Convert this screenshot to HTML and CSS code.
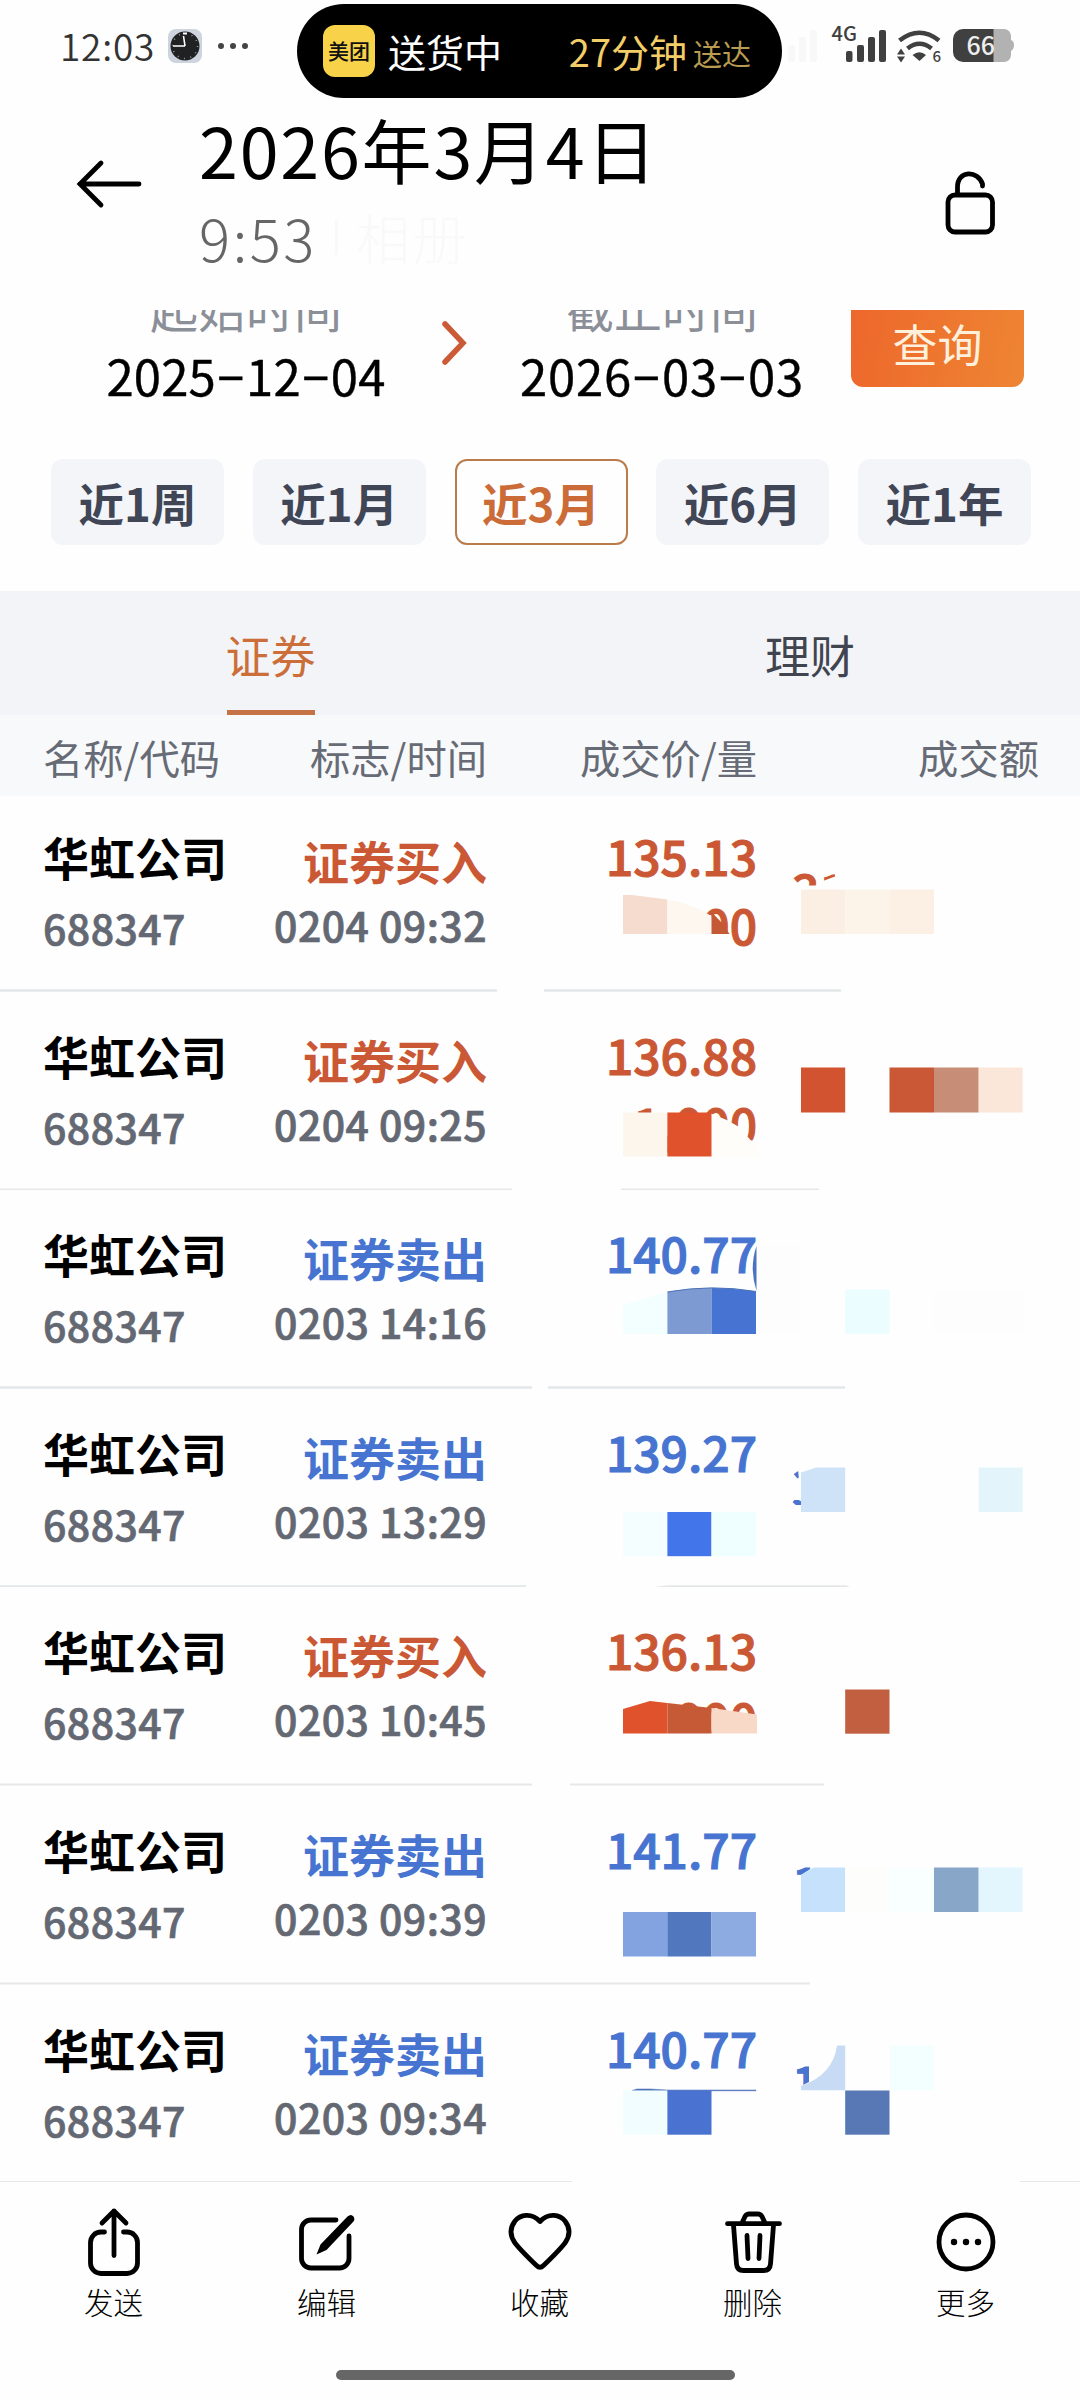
FILE: index.html
```html
<!DOCTYPE html>
<html lang="zh-CN">
<head>
    <meta charset="UTF-8">
    <meta name="viewport" content="width=device-width, initial-scale=1.0">
    <title>2026年3月4日</title>
    <link rel="stylesheet" href="styles.css">
</head>
<body>
    <div class="status-bar">
        <span class="clock">12:03</span>
        <svg class="clock-icon" width="34" height="34" viewBox="0 0 34 34">
            <rect width="34" height="34" rx="8" fill="#cdd4dd"/>
            <circle cx="17" cy="17" r="14.5" fill="#1f2123"/>
            <circle cx="17" cy="17" r="12.5" fill="none" stroke="#999" stroke-width="1.5" stroke-dasharray="1 5.54"/>
            <path d="M17 17L15.5 7M17 17H5" stroke="#fff" stroke-width="1.6" fill="none"/>
            <path d="M15 4.5h4" stroke="#fff" stroke-width="2"/>
        </svg>
        <svg class="dots" width="32" height="8" viewBox="0 0 32 8" fill="#444">
            <circle cx="4" cy="4" r="3"/><circle cx="16" cy="4" r="3"/><circle cx="28" cy="4" r="3"/>
        </svg>
        <div class="island">
            <span class="app-logo">美团</span>
            <span class="island-title">送货中</span>
            <span class="island-time">27分钟</span>
            <span class="island-note">送达</span>
        </div>
        <svg class="signals" width="232" height="60" viewBox="786 16 232 60" fill="#404040">
            <g fill="#f8f8f8">
                <rect x="788" y="45" width="7" height="17" rx="2"/>
                <rect x="799" y="37" width="7" height="25" rx="2"/>
                <rect x="810" y="30" width="7" height="32" rx="2"/>
            </g>
            <text class="net" x="831.5" y="40.5">4G</text>
            <rect x="846" y="51" width="6.5" height="11" rx="2"/>
            <rect x="857" y="45" width="7" height="17" rx="2"/>
            <rect x="868" y="37" width="7" height="25" rx="2"/>
            <rect x="879" y="30" width="7" height="32" rx="2"/>
            <path d="M899.500 40.500Q919.500 25 939 40.500M907.500 48.500Q919.500 39 931.500 48.500" fill="none" stroke="#404040" stroke-width="4.600"/>
            <path d="M912.500 55Q919.500 49.500 926 55L919.500 61Z"/>
            <path d="M897 54.500L901 48.500L905 54.500ZM897 56.500H905L901 62.500Z"/>
            <text class="wifi-gen" x="932.500" y="62">6</text>
            <path d="M1004 29a7 7 0 0 1 7 7v4q3 1 3 5t-3 6v4a7 7 0 0 1-7 7h-11V29Z" fill="#b2b2b2"/>
            <path d="M993.500 29H963a10 10 0 0 0-10 10v13a10 10 0 0 0 10 10h30.500Z"/>
            <text class="battery" x="966.500" y="55">66</text>
        </svg>
    </div>

    <header class="header">
        <svg class="back" width="72" height="56" viewBox="0 0 72 56" fill="none" stroke="#000" stroke-width="4.800" stroke-linecap="round">
            <path d="M7 28H66M28 7L7 28L28 49"/>
        </svg>
        <div class="heading">
            <h1>2026年3月4日</h1>
            <p>9:53<span class="album"><i></i>相册</span></p>
        </div>
        <svg class="lock" width="56" height="66" viewBox="0 0 56 66" fill="none" stroke="#000" stroke-width="4.800" stroke-linecap="round">
            <rect x="6" y="26" width="44.500" height="37" rx="7"/>
            <path d="M15.500 25V18C15.500 1 36 1 40.500 15V17"/>
        </svg>
    </header>

    <main>
        <section class="query">
            <div class="date">
                <label>起始时间</label>
                <strong>2025<b>-</b>12<b>-</b>04</strong>
            </div>
            <svg class="arrow" width="26" height="46" viewBox="0 0 26 46" fill="none" stroke="#cb5b36" stroke-width="5.500" stroke-linecap="round">
                <path d="M4 4L22 23L4 42"/>
            </svg>
            <div class="date date-end">
                <label>截止时间</label>
                <strong>2026<b>-</b>03<b>-</b>03</strong>
            </div>
            <button class="search">查询</button>
        </section>

        <section class="ranges">
            <button>近1周</button>
            <button>近1月</button>
            <button class="active">近3月</button>
            <button>近6月</button>
            <button>近1年</button>
        </section>

        <nav class="tabs">
            <a class="active">证券</a>
            <a>理财</a>
        </nav>

        <div class="columns">
            <span>名称/代码</span>
            <span>标志/时间</span>
            <span>成交价/量</span>
            <span>成交额</span>
        </div>

        <div class="trades">
            <div class="trade buy">
                <div class="stock"><h3>华虹公司</h3><p>688347</p></div>
                <div class="side"><h3>证券买入</h3><p>0204 09:32</p></div>
                <div class="price"><h3>135.13</h3><p>00</p></div>
                <div class="amount">31</div>
                <svg class="cover" viewBox="0 0 1080 198.600">
                    <path d="M600 141H731V162H600ZM690 122H711.500V150H690ZM780 92.500H818V130H780ZM817 70H823V130H817ZM823 88L835 83.500V76H860V130H817Z" fill="#fefefe"/>
                    <path d="M623 102H632L667.400 106.500V141H623Z" fill="#f6dccf"/>
                    <path d="M667.400 106.500Q690 110 711.500 123V141H667.400Z" fill="#fdf7ef"/>
                    <path d="M711.500 119L723 131L729.500 141H711.500Z" fill="#c45935"/>
                    <rect x="801" y="96.500" width="44.500" height="44.500" fill="#fbeee2"/>
                    <rect x="845.500" y="96.500" width="44" height="44.500" fill="#fcf4e8"/>
                    <rect x="889.500" y="96.500" width="44.500" height="44.500" fill="#fcf0e5"/>
                    <path class="rule" d="M0 197.500H497M544 197.500H841"/>
                </svg>
            </div>

            <div class="trade buy">
                <div class="stock"><h3>华虹公司</h3><p>688347</p></div>
                <div class="side"><h3>证券买入</h3><p>0204 09:25</p></div>
                <div class="price"><h3>136.88</h3><p>1,000</p></div>
                <div class="amount"></div>
                <svg class="cover" viewBox="0 0 1080 198.600">
                    <path d="M711 121.500L728 128.500L739 135L751 148.500H758V165H711Z" fill="#fefdfa"/>
                    <rect x="623" y="120.500" width="44.500" height="44" fill="#fdf6ed"/>
                    <rect x="667.400" y="120.500" width="44.100" height="44" fill="#e0522c"/>
                    <rect x="801" y="75.500" width="44.200" height="45" fill="#d1532f"/>
                    <rect x="889.500" y="75.500" width="44.500" height="45" fill="#ca5735"/>
                    <rect x="934" y="75.500" width="44.700" height="45" fill="#c88d76"/>
                    <rect x="978.700" y="75.500" width="44" height="45" fill="#fbe7da"/>
                    <path class="rule thin" d="M0 197.500H512M621 197.500H819"/>
                </svg>
            </div>

            <div class="trade sell">
                <div class="stock"><h3>华虹公司</h3><p>688347</p></div>
                <div class="side"><h3>证券卖出</h3><p>0203 14:16</p></div>
                <div class="price"><h3>140.77</h3><p></p></div>
                <div class="amount"></div>
                <svg class="cover" viewBox="0 0 1080 198.600">
                    <path d="M756.500 56Q749 78 756.500 101Z" fill="#4a72c0"/>
                    <path d="M623 115L667.400 102V144H623Z" fill="#f3ffff"/>
                    <path d="M667.400 102Q690 98 711.500 98V144H667.400Z" fill="#7d9bd2"/>
                    <path d="M711.500 98Q735 98 756 101.500V144H711.500Z" fill="#4774d3"/>
                    <path d="M667.400 102Q712 94 756 101.500" fill="none" stroke="#4a6fb5" stroke-width="1"/>
                    <rect x="757" y="55" width="44" height="89" fill="#fefdfd"/>
                    <rect x="845.200" y="99.500" width="44.300" height="44.500" fill="#ebfdff"/>
                    <rect x="934" y="99.500" width="88.700" height="44.500" fill="#fdfdfd"/>
                    <path class="rule" d="M0 197.500H532M548 197.500H845"/>
                </svg>
            </div>

            <div class="trade sell">
                <div class="stock"><h3>华虹公司</h3><p>688347</p></div>
                <div class="side"><h3>证券卖出</h3><p>0203 13:29</p></div>
                <div class="price"><h3>139.27</h3><p></p></div>
                <div class="amount">3</div>
                <svg class="cover" viewBox="0 0 1080 198.600">
                    <path d="M785 91H799L798 80L815 76H850V130H785V116H801V111H785Z" fill="#fefefe"/>
                    <rect x="623" y="123" width="44.500" height="44.200" fill="#f4fdff"/>
                    <rect x="667.400" y="123" width="44.100" height="44.200" fill="#4274ea"/>
                    <rect x="711.500" y="123" width="44.500" height="44.200" fill="#effeff"/>
                    <path d="M801 83.500L816 78.500H845.200V123H801Z" fill="#cfe3f8"/>
                    <rect x="978.700" y="78.500" width="44" height="44.500" fill="#e3f5fb"/>
                    <path class="rule" d="M0 197.500H526"/>
                    <path d="M650 198.500L668 196.200H846L851 198.500Z" fill="#e4e7e8"/>
                </svg>
            </div>

            <div class="trade buy">
                <div class="stock"><h3>华虹公司</h3><p>688347</p></div>
                <div class="side"><h3>证券买入</h3><p>0203 10:45</p></div>
                <div class="price"><h3>136.13</h3><p>000</p></div>
                <div class="amount"></div>
                <svg class="cover" viewBox="0 0 1080 198.600">
                    <rect x="620" y="146" width="140" height="12" fill="#fefefe"/>
                    <path d="M623 122L650 114L667.400 116V146.500H623Z" fill="#e0522c"/>
                    <path d="M667.400 116L711.500 121V146.500H667.400Z" fill="#c65a36"/>
                    <path d="M711.500 121L757 127.500V146.500H711.500Z" fill="#f8d9c8"/>
                    <rect x="845.200" y="102.500" width="44.300" height="44.200" fill="#c15f40"/>
                    <path class="rule thin" d="M0 197.500H532M570 197.500H824"/>
                </svg>
            </div>

            <div class="trade sell">
                <div class="stock"><h3>华虹公司</h3><p>688347</p></div>
                <div class="side"><h3>证券卖出</h3><p>0203 09:39</p></div>
                <div class="price"><h3>141.77</h3><p></p></div>
                <div class="amount">1</div>
                <svg class="cover" viewBox="0 0 1080 198.600">
                    <path d="M785 92L801 89L812 82H850V130H785Z" fill="#fefefe"/>
                    <rect x="623" y="126" width="44.500" height="44.500" fill="#82a2e0"/>
                    <rect x="667.400" y="126" width="44.100" height="44.500" fill="#5178be"/>
                    <rect x="711.500" y="126" width="44.500" height="44.500" fill="#8dabe1"/>
                    <path d="M801 89L814 81.500H845.200V126H801Z" fill="#c5e1fb"/>
                    <rect x="845.200" y="81.500" width="44.300" height="44.500" fill="#fdfdfb"/>
                    <rect x="889.500" y="81.500" width="44.500" height="44.500" fill="#f9ffff"/>
                    <rect x="934" y="81.500" width="44.700" height="44.500" fill="#87a6c8"/>
                    <rect x="978.700" y="81.500" width="44" height="44.500" fill="#e4f6fd"/>
                    <path class="rule thin" d="M0 197.500H810"/>
                </svg>
            </div>

            <div class="trade sell">
                <div class="stock"><h3>华虹公司</h3><p>688347</p></div>
                <div class="side"><h3>证券卖出</h3><p>0203 09:34</p></div>
                <div class="price"><h3>140.77</h3><p></p></div>
                <div class="amount">1</div>
                <svg class="cover" viewBox="0 0 1080 198.600">
                    <path d="M785 101L801 101L809 97V80H835V130H785Z" fill="#fefefe"/>
                    <path d="M632 105.500L637 104H650L667 105H756V105.800H632Z" fill="#4a70b8" stroke="#4a70b8" stroke-width=".5"/>
                    <rect x="623" y="105.500" width="44.500" height="44.200" fill="#f1fdff"/>
                    <rect x="667.400" y="105.500" width="44.100" height="44.200" fill="#4972d1"/>
                    <path d="M801 101Q833 90 837 60.500H845.200V105.200H801Z" fill="#c7dbf4"/>
                    <rect x="889.500" y="60.500" width="44.500" height="44.500" fill="#f3feff"/>
                    <rect x="845.200" y="105.500" width="44.300" height="44.200" fill="#5777b5"/>
                    <path class="rule hair" d="M0 196.500H572M1020 196.500H1080"/>
                </svg>
            </div>
        </div>
    </main>

    <footer class="toolbar">
        <a>
            <svg width="72" height="76" viewBox="0 0 72 76">
                <path d="M26.500 28H23A10.500 10.500 0 0 0 12.500 38.500V59A10.500 10.500 0 0 0 23 69.500H49A10.500 10.500 0 0 0 59.500 59V38.500A10.500 10.500 0 0 0 49 28H45.500M36 51.500V7M24 19L36 7L48 19"/>
            </svg>
            发送
        </a>
        <a>
            <svg width="72" height="76" viewBox="0 0 72 76">
                <path d="M45 16H20A9.500 9.500 0 0 0 10.500 25.500V54.500A9.500 9.500 0 0 0 20 64H48.500A9.500 9.500 0 0 0 58 54.500V32"/>
                <path d="M56.500 12.500Q60 9.500 62.500 12.500Q64.500 15.500 62 18L35.500 46L25.500 50.500L29.500 40.500Z" fill="#000" stroke="none"/>
            </svg>
            编辑
        </a>
        <a>
            <svg width="72" height="76" viewBox="0 0 72 76">
                <path d="M36 17.500C27 8 16 11 11 17C5 25 6 32 11 39C18 48 26 55 32.500 61.500Q36 65 39.500 61.500C46 55 54 48 61 39C66 32 67 25 61 17C56 11 45 8 36 17.500Z"/>
            </svg>
            收藏
        </a>
        <a>
            <svg width="72" height="76" viewBox="0 0 72 76">
                <path d="M10.500 19.700H62.500M25 19L28 12.500Q29.500 10 32 10H41Q43.500 10 45 12.500L48 19M16.500 21L19.500 60Q20 66.500 26.500 66.500H46.500Q53 66.500 53.500 60L56.500 21M30 31.500L31 54.500M43 31.500L42 54.500"/>
            </svg>
            删除
        </a>
        <a>
            <svg width="72" height="76" viewBox="0 0 72 76">
                <circle cx="36" cy="38" r="27"/>
                <g fill="#000" stroke="none"><circle cx="24" cy="38" r="3.200"/><circle cx="36" cy="38" r="3.200"/><circle cx="48" cy="38" r="3.200"/></g>
            </svg>
            更多
        </a>
    </footer>
    <div class="home-bar"></div>
</body>
</html>
```
FILE: styles.css
```css
/* General Styles */
* {
    box-sizing: border-box;
}

body {
    margin: 0;
    width: 1080px;
    height: 2400px;
    overflow: hidden;
    background-color: #fefefe;
    color: #000;
    font-family: "Noto Sans CJK SC", sans-serif;
}

h1, h3, p {
    margin: 0;
}

button {
    border: none;
    padding: 0;
    font-family: inherit;
}

/* Status bar */
.status-bar {
    position: relative;
    display: flex;
    align-items: center;
    height: 98px;
    padding: 0 62px 6px 60px;
}

.clock {
    width: 108px;
    margin-top: -3px;
    color: #333;
    font-size: 37px;
    font-weight: 350;
    letter-spacing: 0.8px;
    line-height: 40px;
}

.dots {
    margin-left: 15px;
}

.signals {
    margin-left: auto;
}

.signals text {
    font-weight: 500;
}

.signals .net {
    font-size: 20px;
}

.signals .wifi-gen {
    font-size: 15px;
}

.signals .battery {
    font-size: 25px;
    fill: #eee;
}

.island {
    position: absolute;
    left: 297px;
    top: 4px;
    display: flex;
    align-items: center;
    width: 485px;
    height: 94px;
    padding: 0 31px 0 26px;
    border-radius: 47px;
    background-color: #000;
    color: #fff;
    font-size: 38px;
    line-height: 50px;
    white-space: nowrap;
}

.app-logo {
    width: 52px;
    height: 52px;
    border-radius: 12px;
    background-color: #f8d34a;
    color: #111;
    font-size: 21px;
    font-weight: 500;
    line-height: 50px;
    text-align: center;
}

.island-title {
    margin-left: 13px;
}

.island-time {
    margin-left: auto;
    color: #f3cd68;
}

.island-note {
    margin: 4px 0 0 6px;
    color: #b89b50;
    font-size: 29px;
}

/* Header */
.header {
    display: flex;
    height: 212px;
    padding: 3px 82px 0 73px;
}

.back {
    margin-top: 55px;
}

.heading {
    margin-left: 54px;
    padding-top: 3px;
}

.heading h1 {
    font-size: 70px;
    font-weight: 400;
    letter-spacing: 1.8px;
    line-height: 90px;
}

.heading p {
    display: flex;
    margin-top: -2px;
    color: #666;
    font-size: 58px;
    font-weight: 300;
    letter-spacing: 2.6px;
    line-height: 90px;
}

.album {
    display: flex;
    align-items: center;
    color: #f9f9f9;
    font-size: 54px;
}

.album i {
    width: 3px;
    height: 36px;
    margin: 0 18px 0 18px;
    background-color: #f9f9f9;
}

.lock {
    margin: 68px 0 0 auto;
}

/* Date query, scrolled under the header */
.query {
    display: flex;
    height: 149px;
    padding-left: 96px;
    overflow: hidden;
}

.date {
    display: flex;
    flex-direction: column;
    gap: 8px;
    width: 300px;
    margin-top: -33px;
    text-align: center;
    line-height: 60px;
}

.date label {
    color: #8b8f98;
    font-size: 48px;
}

.date strong {
    font-size: 49px;
    font-weight: 400;
    letter-spacing: 0.2px;
    -webkit-text-stroke: 0.4px;
}

.date-end strong {
    letter-spacing: 0.8px;
}

.date b {
    display: inline-block;
    width: 30px;
    font-weight: 400;
    transform: translateY(-4px) scaleX(1.8);
}

.arrow {
    margin: 10px 45px 0;
}

.search {
    width: 173px;
    height: 89px;
    margin: -12px 0 0 39px;
    border-radius: 12px;
    background: linear-gradient(100deg, #ed672b, #ee8533);
    color: #fff0dc;
    font-size: 45px;
    line-height: 91px;
}

/* Quick ranges */
.ranges {
    display: flex;
    justify-content: space-between;
    height: 132px;
    padding: 0 49px 0 51px;
}

.ranges button {
    width: 173px;
    height: 86px;
    border-radius: 12px;
    background-color: #f4f5f9;
    color: #404656;
    font-size: 45.5px;
    font-weight: 700;
    line-height: 84px;
}

.ranges .active {
    border: 2px solid #bb7c4b;
    background-color: #fefefe;
    color: #cb6c38;
    line-height: 80px;
}

/* Tabs */
.tabs {
    display: flex;
    height: 124px;
    background-color: #f3f4f7;
}

.tabs a {
    flex: 1;
    display: flex;
    justify-content: center;
    color: #40444f;
    font-size: 45px;
    line-height: 127px;
}

.tabs .active {
    color: #cb6e3a;
}

.tabs .active::after {
    content: "";
    align-self: flex-end;
    width: 88px;
    height: 5px;
    margin-left: -89px;
    background-color: #c57247;
}

/* Trade list */
.columns {
    display: grid;
    grid-template-columns: 200px 244px 270px 282px;
    height: 81px;
    padding-left: 43px;
    background-color: #f8f9fb;
    color: #666b75;
    font-size: 40.3px;
    line-height: 83px;
}

.columns span + span {
    text-align: right;
}

.trades {
    margin-top: -3px;
}

.trade {
    position: relative;
    display: grid;
    grid-template-columns: 200px 244px 270px 1fr;
    height: 198.6px;
    padding-left: 43px;
    line-height: 60px;
}

.trade h3 {
    height: 60px;
    font-size: 46px;
    font-weight: 700;
    white-space: nowrap;
}

.trade p {
    color: #636873;
    font-size: 41px;
    font-weight: 500;
    letter-spacing: 0.45px;
    -webkit-text-stroke: 0.7px;
}

.stock {
    padding-top: 33px;
}

.stock p {
    margin-top: 11px;
}

.side {
    padding-top: 37px;
    text-align: right;
}

.side p {
    margin-top: 4px;
}

.price {
    padding-top: 32px;
    text-align: right;
}

.price h3,
.price p,
.amount {
    font-size: 48px;
    font-weight: 500;
    letter-spacing: 0;
    -webkit-text-stroke: 1.1px;
}

.price p {
    margin-top: 9px;
}

.amount {
    padding: 66px 0 0 35px;
}

.buy .side h3,
.buy .price,
.buy .price p,
.buy .amount {
    color: #cb5834;
}

.sell .side h3,
.sell .price,
.sell .price p,
.sell .amount {
    color: #4674d0;
}

/* Mosaic blocks and separators */
.cover {
    position: absolute;
    left: 0;
    top: 0;
    width: 1080px;
    height: 198.6px;
}

.rule {
    stroke: #e3e7e9;
    stroke-width: 2.6;
}

.rule.thin {
    stroke: #e6e7e8;
    stroke-width: 2;
}

.rule.hair {
    stroke: #e6e7e8;
    stroke-width: 1;
}

/* Bottom toolbar */
.toolbar {
    display: flex;
    justify-content: space-between;
    height: 187px;
    padding: 21px 65px 0 64px;
}

.toolbar a {
    display: flex;
    flex-direction: column;
    align-items: center;
    width: 99px;
    font-size: 29.5px;
    font-weight: 300;
    line-height: 42px;
}

.toolbar svg {
    fill: none;
    stroke: #000;
    stroke-width: 4.8;
    stroke-linecap: round;
    stroke-linejoin: round;
}

.home-bar {
    width: 399px;
    height: 10px;
    margin-left: 336px;
    border-radius: 5px;
    background-color: #666;
}
```
